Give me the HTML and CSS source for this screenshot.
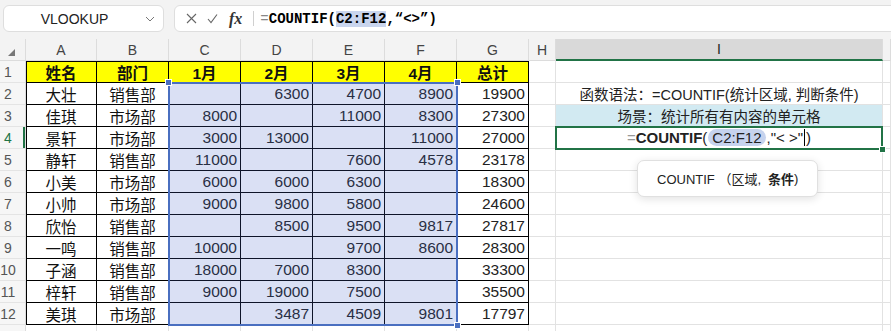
FILE: index.html
```html
<!DOCTYPE html>
<html lang="zh-CN">
  <head>
    <meta charset="UTF-8" />
    <title>COUNTIF</title>
    <link rel="stylesheet" href="styles.css">
  </head>
  <body>
    <div class="topbar">
      <div class="namebox">
        <span class="name">VLOOKUP</span>
        <svg class="chev" width="10" height="6" viewBox="0 0 10 6"><path d="M1 1l4 4 4-4" fill="none" stroke="#777" stroke-width="1"/></svg>
      </div>
      <div class="fbox">
        <svg class="ico" width="11" height="11" viewBox="0 0 11 11"><path d="M1 1l9 9M10 1l-9 9" stroke="#666" stroke-width="1.1"/></svg>
        <svg class="ico" width="11" height="11" viewBox="0 0 11 11"><path d="M1 6l3 3.5 6-8" fill="none" stroke="#666" stroke-width="1.1"/></svg>
        <span class="fx">fx</span>
        <span class="bar"></span>
        <span class="formula"><span class="eq">=</span>COUNTIF(<span class="hl">C2:F12</span>,“&lt;&gt;”)</span>
      </div>
    </div>

    <div class="sheet">
      <div class="grid">
        <div class="ch corner"><svg width="7" height="7" viewBox="0 0 7 7"><path d="M7 0v7H0z" fill="#777"/></svg></div>
        <div class="ch">A</div><div class="ch">B</div><div class="ch">C</div><div class="ch">D</div>
        <div class="ch">E</div><div class="ch">F</div><div class="ch">G</div><div class="ch">H</div>
        <div class="ch on">I</div><div class="ch"></div>

        <div class="rh">1</div>
        <div class="c t hd a1">姓名</div><div class="c t hd r1">部门</div><div class="c t hd r1">1月</div>
        <div class="c t hd r1">2月</div><div class="c t hd r1">3月</div><div class="c t hd r1">4月</div>
        <div class="c t hd r1">总计</div><div class="c"></div><div class="c"></div><div class="c"></div>

        <div class="rh">2</div>
        <div class="c t ca">大壮</div><div class="c t">销售部</div><div class="c t n"></div>
        <div class="c t n">6300</div><div class="c t n">4700</div><div class="c t n">8900</div>
        <div class="c t n">19900</div><div class="c"></div>
        <div class="c ci">函数语法：=COUNTIF(统计区域, 判断条件)</div><div class="c"></div>

        <div class="rh">3</div>
        <div class="c t ca">佳琪</div><div class="c t">市场部</div><div class="c t n">8000</div>
        <div class="c t n"></div><div class="c t n">11000</div><div class="c t n">8300</div>
        <div class="c t n">27300</div><div class="c"></div>
        <div class="c ci scene">场景：统计所有有内容的单元格</div><div class="c"></div>

        <div class="rh on">4</div>
        <div class="c t ca">景轩</div><div class="c t">市场部</div><div class="c t n">3000</div>
        <div class="c t n">13000</div><div class="c t n"></div><div class="c t n">11000</div>
        <div class="c t n">27000</div><div class="c"></div>
        <div class="c ci edit"><span class="eq">=</span><b>COUNTIF</b>(<span class="pill">C2:F12</span>,"&lt; &gt;"<span class="caret"></span>)</div><div class="c"></div>

        <div class="rh">5</div>
        <div class="c t ca">静轩</div><div class="c t">销售部</div><div class="c t n">11000</div>
        <div class="c t n"></div><div class="c t n">7600</div><div class="c t n">4578</div>
        <div class="c t n">23178</div><div class="c"></div><div class="c"></div><div class="c"></div>

        <div class="rh">6</div>
        <div class="c t ca">小美</div><div class="c t">市场部</div><div class="c t n">6000</div>
        <div class="c t n">6000</div><div class="c t n">6300</div><div class="c t n"></div>
        <div class="c t n">18300</div><div class="c"></div><div class="c"></div><div class="c"></div>

        <div class="rh">7</div>
        <div class="c t ca">小帅</div><div class="c t">市场部</div><div class="c t n">9000</div>
        <div class="c t n">9800</div><div class="c t n">5800</div><div class="c t n"></div>
        <div class="c t n">24600</div><div class="c"></div><div class="c"></div><div class="c"></div>

        <div class="rh">8</div>
        <div class="c t ca">欣怡</div><div class="c t">销售部</div><div class="c t n"></div>
        <div class="c t n">8500</div><div class="c t n">9500</div><div class="c t n">9817</div>
        <div class="c t n">27817</div><div class="c"></div><div class="c"></div><div class="c"></div>

        <div class="rh">9</div>
        <div class="c t ca">一鸣</div><div class="c t">销售部</div><div class="c t n">10000</div>
        <div class="c t n"></div><div class="c t n">9700</div><div class="c t n">8600</div>
        <div class="c t n">28300</div><div class="c"></div><div class="c"></div><div class="c"></div>

        <div class="rh">10</div>
        <div class="c t ca">子涵</div><div class="c t">销售部</div><div class="c t n">18000</div>
        <div class="c t n">7000</div><div class="c t n">8300</div><div class="c t n"></div>
        <div class="c t n">33300</div><div class="c"></div><div class="c"></div><div class="c"></div>

        <div class="rh">11</div>
        <div class="c t ca">梓轩</div><div class="c t">销售部</div><div class="c t n">9000</div>
        <div class="c t n">19000</div><div class="c t n">7500</div><div class="c t n"></div>
        <div class="c t n">35500</div><div class="c"></div><div class="c"></div><div class="c"></div>

        <div class="rh">12</div>
        <div class="c t ca">美琪</div><div class="c t">市场部</div><div class="c t n"></div>
        <div class="c t n">3487</div><div class="c t n">4509</div><div class="c t n">9801</div>
        <div class="c t n">17797</div><div class="c"></div><div class="c"></div><div class="c"></div>

        <div class="rh"></div>
        <div class="c"></div><div class="c"></div><div class="c"></div><div class="c"></div><div class="c"></div>
        <div class="c"></div><div class="c"></div><div class="c"></div><div class="c"></div><div class="c"></div>
      </div>

      <div class="range">
        <span class="knob tl"></span><span class="knob tr"></span><span class="knob br"></span>
      </div>
      <div class="active"><span class="knob br"></span></div>

      <div class="tip">COUNTIF （区域,<b>条件</b>)</div>
    </div>
  </body>
</html>
```

FILE: styles.css
```css
body {
  margin: 0;
  width: 891px;
  height: 331px;
  overflow: hidden;
  background: #fff;
  font-family: "Liberation Sans", "Noto Sans CJK SC", sans-serif;
  color: #111;
}

/* formula bar */
.topbar {
  height: 39px;
  box-sizing: border-box;
  background: #f3f3f3;
  display: flex;
  align-items: flex-start;
  gap: 10px;
  padding: 5px 0 0 3px;
}
.namebox {
  width: 161px;
  height: 27px;
  box-sizing: border-box;
  background: #fff;
  border: 1px solid #dedede;
  border-radius: 6px;
  display: flex;
  align-items: center;
  font-size: 14px;
  color: #222;
}
.namebox .name {
  flex: 1;
  text-align: center;
}
.namebox .chev {
  margin-right: 8px;
}
.fbox {
  flex: 1;
  margin-right: -20px;
  height: 27px;
  box-sizing: border-box;
  background: #fff;
  border: 1px solid #dedede;
  border-radius: 6px;
  display: flex;
  align-items: center;
  padding-left: 11px;
}
.ico {
  margin-right: 10px;
}
.fx {
  font-family: "Liberation Serif", serif;
  font-style: italic;
  font-weight: bold;
  font-size: 16px;
  color: #333;
  margin-left: 1px;
}
.bar {
  width: 1px;
  height: 15px;
  background: #d0d0d0;
  margin: 0 6px 0 11px;
}
.formula {
  font-family: "Liberation Mono", monospace;
  font-weight: bold;
  font-size: 14px;
  color: #000;
}
.formula .eq {
  font-weight: normal;
  color: #888;
}
.formula .hl {
  background: #c9d5ee;
}

/* sheet */
.sheet {
  position: relative;
}
.grid {
  display: grid;
  grid-template-columns: 26px 71px repeat(6, 72px) 27px 327px 1fr;
  grid-auto-rows: 22px;
}
.ch {
  background: #f3f3f3;
  border-right: 1px solid #dcdcdc;
  border-bottom: 1px solid #dcdcdc;
  display: flex;
  align-items: center;
  justify-content: center;
  font-size: 14px;
  color: #444;
}
.ch.corner {
  justify-content: flex-start;
  padding: 5px 0 0 8px;
  box-sizing: border-box;
}
.ch.on {
  background: #d9d9d9;
  border-bottom: 2px solid #217346;
  color: #222;
}
.rh {
  background: #f6f6f6;
  border-right: 1px solid #dcdcdc;
  border-bottom: 1px solid #e4e4e4;
  display: flex;
  align-items: center;
  justify-content: center;
  padding-right: 9px;
  font-size: 14px;
  color: #555;
}
.rh.on {
  color: #217346;
  box-shadow: inset -2px 0 0 #217346;
}
.c {
  border-right: 1px solid #e2e2e2;
  border-bottom: 1px solid #e2e2e2;
  display: flex;
  align-items: center;
  justify-content: center;
  white-space: nowrap;
  font-size: 15.5px;
}
.t {
  border-color: #000;
}
.n {
  justify-content: flex-end;
  padding-right: 3px;
  color: #222;
}
.hd {
  background: #ffff00;
  font-weight: bold;
}
.r1 {
  box-shadow: inset 0 1px 0 #000;
}
.a1 {
  box-shadow: inset 1px 1px 0 #000;
}
.ca {
  box-shadow: inset 1px 0 0 #000;
}
.ci {
  font-size: 14.5px;
  color: #222;
}
.scene {
  background: #d2eaf2;
}
.edit {
  font-size: 15px;
}
.edit .eq {
  color: #999;
}
.pill {
  background: #c6d3ee;
  border-radius: 9px;
  padding: 0 4px;
  margin: 0 1px;
}
.caret {
  display: inline-block;
  width: 1px;
  height: 17px;
  background: #000;
  margin: 0 1px;
}

/* selection overlays */
.range {
  position: absolute;
  left: 168px;
  top: 43px;
  width: 290px;
  height: 244px;
  box-sizing: border-box;
  border: 2px solid #4a6fc0;
  background: rgba(70, 100, 200, 0.2);
}
.knob {
  position: absolute;
  width: 7px;
  height: 7px;
  box-sizing: border-box;
  background: #4a6fc0;
  border: 1px solid #fff;
}
.knob.tl { left: -5px; top: -5px; }
.knob.tr { right: -5px; top: -5px; }
.knob.br { right: -5px; bottom: -5px; }
.active {
  position: absolute;
  left: 555px;
  top: 87px;
  width: 328px;
  height: 24px;
  box-sizing: border-box;
  border: 2px solid #217346;
}
.active .knob {
  background: #217346;
}

.tip {
  position: absolute;
  left: 637px;
  top: 121px;
  width: 181px;
  height: 37px;
  box-sizing: border-box;
  background: #fff;
  border: 1px solid #e0e0e0;
  border-radius: 7px;
  box-shadow: 0 2px 8px rgba(0, 0, 0, 0.12);
  display: flex;
  align-items: center;
  padding-left: 19px;
  font-size: 13px;
  color: #222;
}
.tip b {
  margin-left: 7px;
}
```
